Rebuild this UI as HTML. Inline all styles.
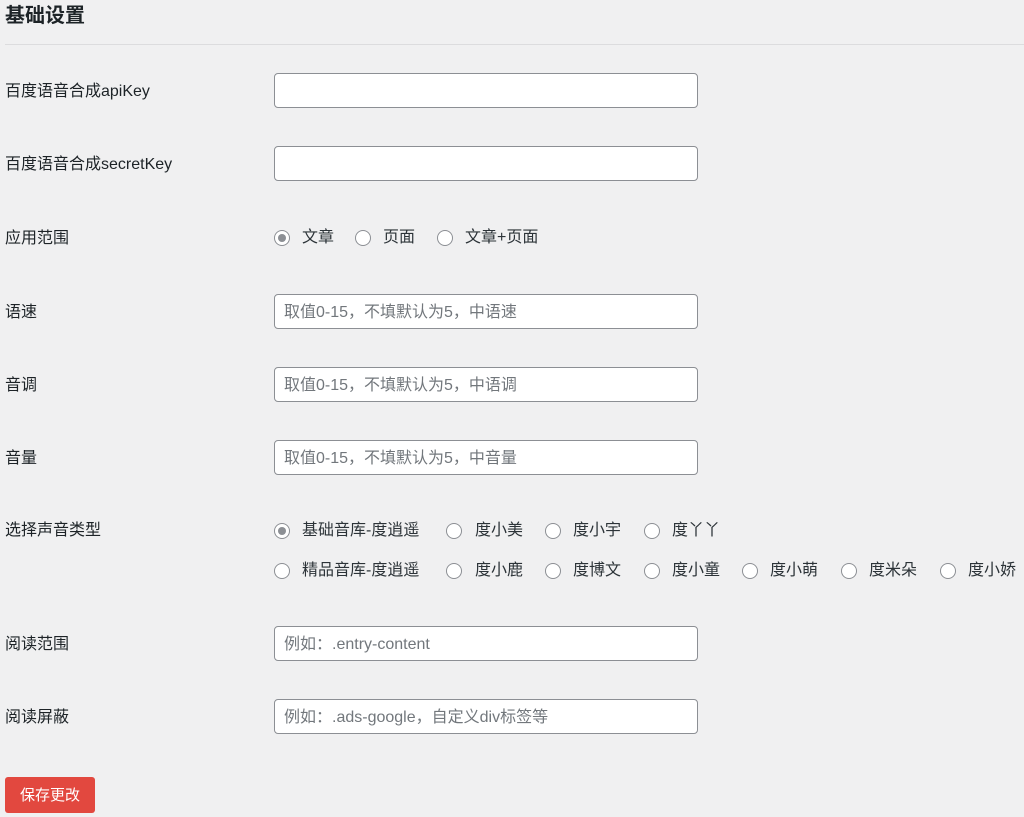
<!DOCTYPE html><html><head><meta charset="utf-8"><style>
body{margin:0;width:1024px;height:817px;background:#f0f0f1;font-family:"Liberation Sans","Noto Sans CJK SC",sans-serif;color:#1d2327;position:relative;overflow:hidden}
h2{position:absolute;left:5px;top:1px;margin:0;font-size:20px;font-weight:bold;line-height:30px}
.hr{position:absolute;left:5px;right:0;top:44px;border-top:1px solid #dcdcde}
.l{position:absolute;left:5px;font-size:16px;line-height:20px;white-space:nowrap}
.i{position:absolute;left:274px;height:33px;border:1px solid #8c8f94;border-radius:4px;background:#fff;font-size:16px;color:#72777c;line-height:35px;padding-left:9px;width:413px;white-space:nowrap}
.r{position:absolute;width:14px;height:14px;border:1px solid #8c8f94;border-radius:50%;background:#fff}
.r.c::after{content:"";position:absolute;left:3px;top:3px;width:8px;height:8px;border-radius:50%;background:#8c8f94}
.t{position:absolute;font-size:16px;line-height:20px;white-space:nowrap;color:#2c3338}
.b{position:absolute;left:5px;top:777px;width:90px;height:36px;background:#e2483f;border-radius:3px;color:#fff;font-size:15px;line-height:38px;text-align:center}
</style></head><body>
<h2>基础设置</h2><div class="hr"></div>
<div class="l" style="top:82px">百度语音合成apiKey</div><div class="i" style="top:73px"></div>
<div class="l" style="top:155px">百度语音合成secretKey</div><div class="i" style="top:146px"></div>
<div class="l" style="top:229px">应用范围</div>
<div class="r c" style="left:274px;top:230px"></div><div class="t" style="left:302px;top:228px">文章</div>
<div class="r" style="left:355px;top:230px"></div><div class="t" style="left:383px;top:228px">页面</div>
<div class="r" style="left:437px;top:230px"></div><div class="t" style="left:465px;top:228px">文章+页面</div>
<div class="l" style="top:303px">语速</div><div class="i" style="top:294px">取值0-15，不填默认为5，中语速</div>
<div class="l" style="top:376px">音调</div><div class="i" style="top:367px">取值0-15，不填默认为5，中语调</div>
<div class="l" style="top:449px">音量</div><div class="i" style="top:440px">取值0-15，不填默认为5，中音量</div>
<div class="l" style="top:521px">选择声音类型</div>
<div class="r c" style="left:274px;top:523px"></div><div class="t" style="left:302px;top:521px">基础音库-度逍遥</div>
<div class="r" style="left:446px;top:523px"></div><div class="t" style="left:475px;top:521px">度小美</div>
<div class="r" style="left:545px;top:523px"></div><div class="t" style="left:573px;top:521px">度小宇</div>
<div class="r" style="left:644px;top:523px"></div><div class="t" style="left:672px;top:521px">度丫丫</div>
<div class="r" style="left:274px;top:563px"></div><div class="t" style="left:302px;top:561px">精品音库-度逍遥</div>
<div class="r" style="left:446px;top:563px"></div><div class="t" style="left:475px;top:561px">度小鹿</div>
<div class="r" style="left:545px;top:563px"></div><div class="t" style="left:573px;top:561px">度博文</div>
<div class="r" style="left:644px;top:563px"></div><div class="t" style="left:672px;top:561px">度小童</div>
<div class="r" style="left:742px;top:563px"></div><div class="t" style="left:770px;top:561px">度小萌</div>
<div class="r" style="left:841px;top:563px"></div><div class="t" style="left:869px;top:561px">度米朵</div>
<div class="r" style="left:940px;top:563px"></div><div class="t" style="left:968px;top:561px">度小娇</div>
<div class="l" style="top:635px">阅读范围</div><div class="i" style="top:626px">例如：.entry-content</div>
<div class="l" style="top:708px">阅读屏蔽</div><div class="i" style="top:699px">例如：.ads-google，自定义div标签等</div>
<div class="b">保存更改</div>
</body></html>
